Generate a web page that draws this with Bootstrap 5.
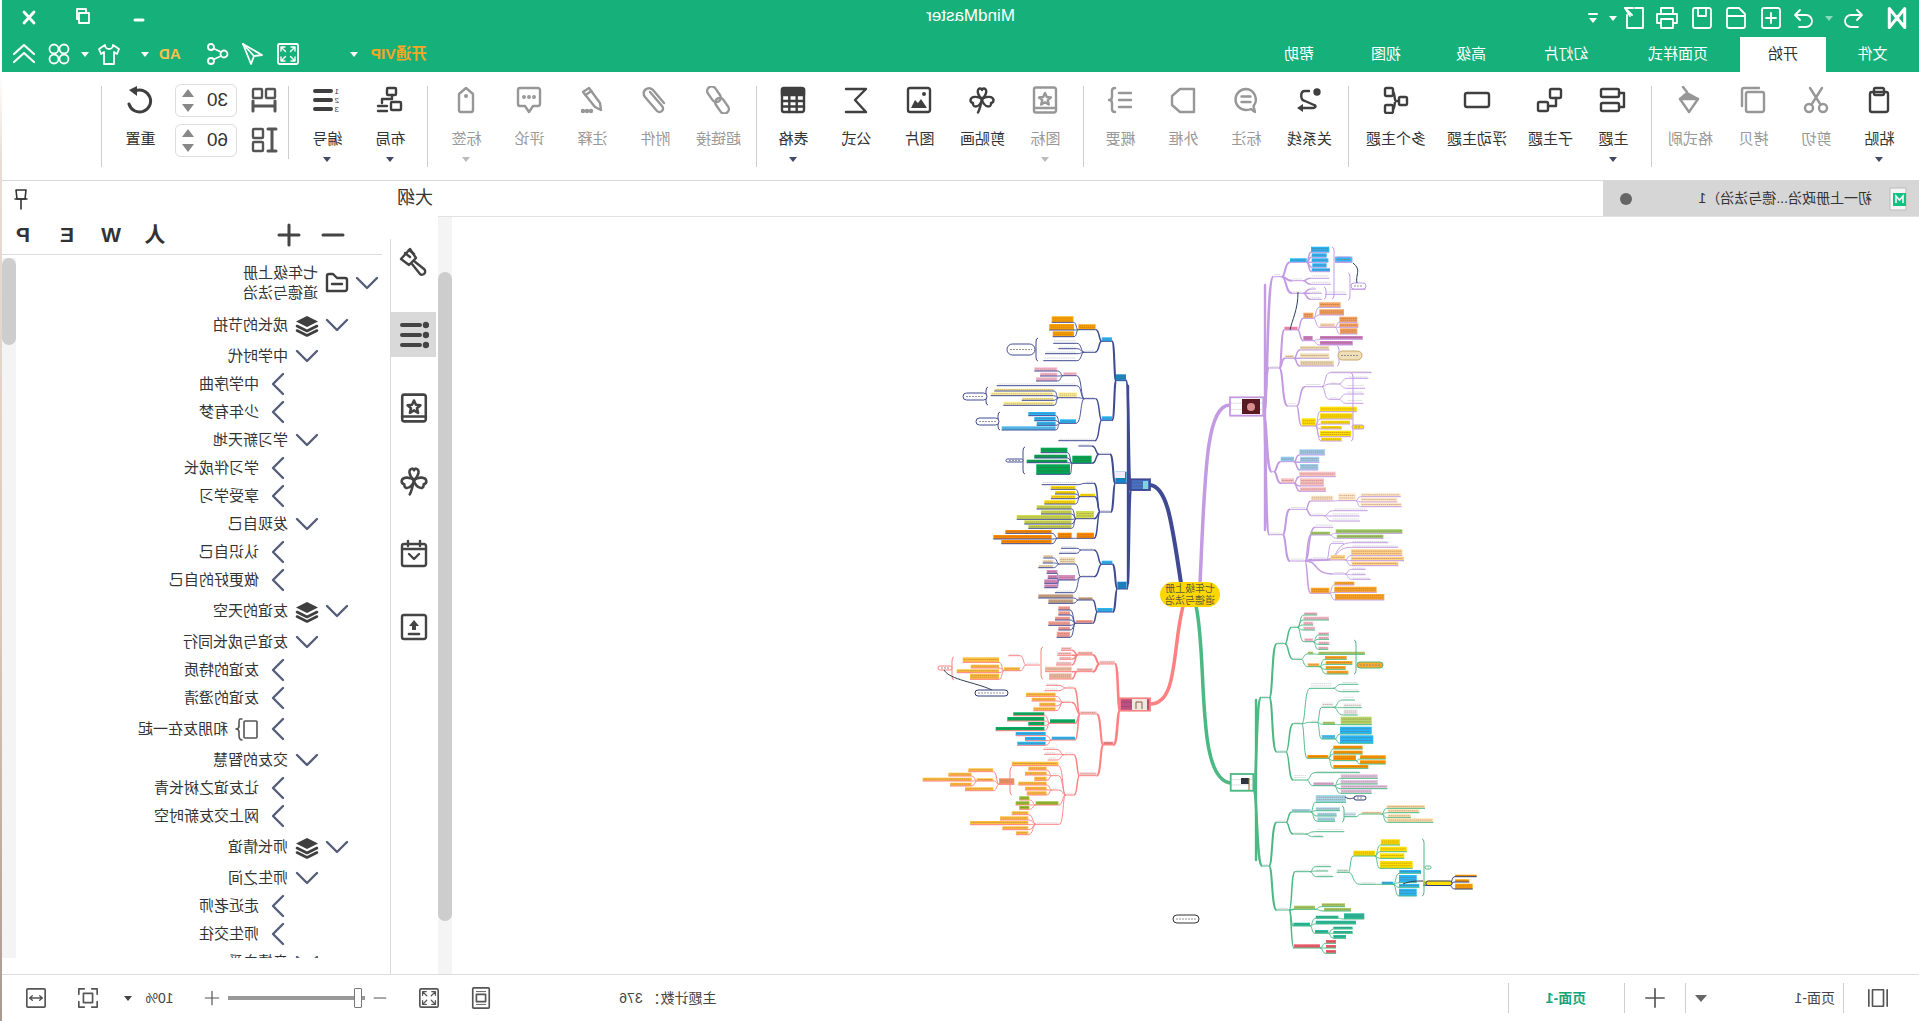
<!DOCTYPE html>
<html lang="zh">
<head>
<meta charset="utf-8">
<title>MindMaster</title>
<link href="https://cdn.jsdelivr.net/npm/bootstrap@5.3.0/dist/css/bootstrap.min.css" rel="stylesheet">
<style>
html,body{height:100%;margin:0;overflow:hidden}
body{padding-left:2px;background:linear-gradient(#fff 0,#fff 7%,#e9ddd3 16%,#d9cabf 60%,#a89a90 100%);font-family:"Liberation Sans","Noto Sans CJK SC",sans-serif;color:#333}
.mm-app{width:1917px;height:1021px;transform:scaleX(-1);background:#fff}
.mm-ico{width:28px;height:28px;fill:none;stroke:currentColor;stroke-width:2.4;stroke-linecap:round;stroke-linejoin:round;flex:none;display:block}
.mm-head{height:72px;background:#16b07a;color:#fff}
.q-row{height:36px;display:grid;grid-template-columns:1fr auto 1fr}
.q-side{display:flex;align-items:center;padding-left:10px}
.q-ico{width:24px;height:24px;stroke-width:1.8}
.q-more{width:12px;height:14px;stroke-width:1.4}
.q-title{font-size:17px;line-height:32px;margin-left:-20px}
.gx-5{margin-left:5px}.gx-8{margin-left:8px}.gx-9{margin-left:9px}.gx-10{margin-left:10px}.gx-11{margin-left:11px}.gx-20{margin-left:20px}.gx-50{margin-left:50px}.gx-25{margin-left:25px}
.gx-5b{margin-left:10px}
.tri{width:0;height:0;border-left:4px solid transparent;border-right:4px solid transparent;border-top:5px solid currentColor;flex:none}
.win-btn{width:55px;display:flex;justify-content:center}
.t-row2{height:36px;display:flex;align-items:flex-end}
.mm-tab{height:35px;display:flex;align-items:center;justify-content:center;font-size:15px;color:#fff;flex:none}
.tab-1{width:93px}.tab-2{width:86px;background:#fff;color:#333}.tab-3{width:124px}.tab-4{width:100px}.tab-5{width:90px}.tab-6{width:80px}.tab-7{width:94px}
.r-tools{margin-left:auto;height:36px;display:flex;align-items:center;padding-right:10px}
.vip{font-size:15.500px;color:#f5a623;font-weight:700;width:60px;text-align:center;white-space:nowrap}
.ad{font-size:15px;color:#f2c14e;font-weight:700}
.mm-ribbon{height:109px;border-bottom:1px solid #d8d8d8;padding-left:8px;display:flex;background:#fff}
.rb-i{width:63px;flex:none;padding-top:14px;display:flex;flex-direction:column;align-items:center;color:#3f3f3f}
.rb-l{font-size:15px;line-height:20px;margin-top:15px;white-space:nowrap;color:#333}
.rb-i .tri{margin-top:8px;color:#444a66}
.rb-off{color:#979797}.rb-off .rb-l{color:#999}.rb-off .tri{color:#bbb}
.rb-w84{width:84px}.rb-w78{width:78px}
.rb-sep{width:1px;height:81px;margin-top:14px;background:#cfcfcf;flex:none;margin-left:7px;margin-right:6px}
.sep-8{margin-left:8px;margin-right:7px}.sep-5{margin-left:5px;margin-right:6px}.sep-7{margin-left:7px;margin-right:5px}
.sep-s{height:73px;margin-right:10px}
.sz-col{width:28px;padding-top:14px;display:flex;flex-direction:column;gap:12px;color:#555;flex:none}
.sp-col{width:62px;margin-left:13px;padding-top:12px;display:flex;flex-direction:column;gap:7px;flex:none}
.sp-box{height:33px;border:1px solid #ddd;border-radius:6px;display:flex;align-items:center;justify-content:space-between;padding:0 6px 0 8px;font-size:19px}
.sp-ar{display:flex;flex-direction:column;gap:7px;color:#777}
.tri-u{width:0;height:0;border-left:6px solid transparent;border-right:6px solid transparent;border-bottom:8px solid #888}
.tri-d{width:0;height:0;border-left:6px solid transparent;border-right:6px solid transparent;border-top:8px solid #888}
.rb-reset{margin-left:3px}
.mm-main{height:793px;display:flex}
.doc-col{width:1481px;flex:none;display:flex;flex-direction:column}
.doc-tabs{height:36px;border-bottom:1px solid #e2e2e2;flex:none}
.doc-tab{width:316px;height:35px;background:#d6d6d6;display:flex;align-items:center;padding-left:12px;font-size:14px}
.doc-ico{width:18px;height:24px;flex:none;margin-right:17px}
.doc-dot{width:12px;height:12px;border-radius:50%;background:#666;margin-left:auto;margin-right:17px}
.doc-body{flex:1;display:flex;min-height:0}
.map-svg{width:1467px;height:757px;transform:scaleX(-1);display:block;flex:none}
.sb-track{width:14px;background:#f4f4f4;flex:none}
.sb-thumb{background:#cdcdcd;border-radius:7px}
.th-a{height:649px;margin-top:55px}
.th-b{height:87px}
.pane{width:436px;flex:none;display:flex;flex-direction:column}
.pane-h{height:35px;display:flex;align-items:center;padding-left:5px;padding-right:11px;font-size:18px;flex:none}
.pane-pin{margin-left:auto;width:16px;height:22px;stroke-width:1.6}
.pane-b{flex:1;display:flex;min-height:0}
.rail{width:47px;padding-top:9px;flex:none;color:#444}
.rail-i{height:73px;display:flex;align-items:center;justify-content:center}
.rail-on{width:45px;height:45px;background:#d9d9d9;display:flex;align-items:center;justify-content:center;margin-left:1px}
.rail-g{width:30px;height:30px}
.pane-sep{width:1px;background:#d9d9d9;margin-top:23px;flex:none}
.tree-col{width:388px;flex:none;display:flex;flex-direction:column}
.tool-row{height:39px;margin-left:8px;border-bottom:1px solid #dcdcdc;display:flex;align-items:center;flex:none;color:#333;font-weight:700;font-size:21px}
.tb-g{width:24px;height:24px;stroke-width:3;color:#444}
.tb-a{margin-left:37px}.tb-b{margin-left:20px}.tb-c{margin-left:110px}
.tb-t{width:24px;text-align:center;line-height:24px;font-family:"Liberation Sans","Noto Sans CJK SC",sans-serif}
.tree-w{flex:1;display:flex;margin-top:3px;margin-bottom:16px;min-height:0}
.tree{width:374px;flex:none;overflow:hidden;font-size:15px;line-height:20px}
.sb-b{background:#f4f4f4}
.t-row{display:flex;align-items:center;height:28px;white-space:nowrap;color:#333}
.l0{height:50px;padding-left:11px}
.l1{height:34px;padding-left:41px}
.l2{padding-left:71px}
.l3{padding-left:100px}
.l3x{height:34px}
.chev{width:24px;height:24px;color:#555e78;flex:none;stroke-width:2.4}
.t-g{width:24px;height:24px;flex:none;margin-left:6px;color:#3f3f3f}
.t-txt{margin-left:7px}
.t-g2{margin-left:7px;width:24px;height:24px;flex:none;color:#555;stroke-width:1.6}
.mm-status{height:47px;border-top:1px solid #dcdcdc;display:flex;align-items:center;font-size:14px;color:#444;flex:none;background:#fff}
.st-sep{width:1px;height:30px;background:#cfcfcf;flex:none}
.st-g{width:22px;height:22px;stroke-width:1.8;color:#555;flex:none}
.st-pg2{width:115px;text-align:center;color:#16a67a;font-weight:700}
.st-count{margin-left:791px;width:107px;white-space:nowrap}
.sl{width:137px;height:4px;background:#999;position:relative;flex:none;margin-left:8px;margin-right:8px}
.sl-th{position:absolute;left:3px;top:-8px;width:8px;height:20px;background:#fff;border:1px solid #777;border-radius:1px}
.tri-b{border-left-width:6px;border-right-width:6px;border-top-width:7px;color:#666}
.s30{margin-left:30px}.s23{margin-left:23px}.s8{margin-left:8px}.s91{margin-left:88px}.s10{margin-left:9px}.s19{margin-left:19px}.s118{margin-left:118px}.s31{margin-left:31px}.s14{margin-left:14px}.s25{margin-left:25px}
.s-min{width:14px;height:22px}.s-pl{width:16px;height:22px}
</style>
</head>
<body>
<svg class="d-none" xmlns="http://www.w3.org/2000/svg">
<symbol id="i-paste" viewBox="0 0 28 28"><rect x="5" y="6" width="18" height="20" rx="2"/><rect x="9" y="2" width="10" height="7" rx="1.5"/></symbol>
<symbol id="i-cut" viewBox="0 0 28 28"><circle cx="7" cy="22" r="4"/><circle cx="21" cy="22" r="4"/><path d="M9.5 18.5 20 2M18.5 18.5 8 2"/></symbol>
<symbol id="i-copy" viewBox="0 0 28 28"><rect x="3" y="6" width="18" height="20" rx="2"/><path d="M8 2H23a2 2 0 0 1 2 2V20"/></symbol>
<symbol id="i-brush" viewBox="0 0 28 28"><path d="M6 13 17 7 24 13Z" fill="currentColor"/><path d="M6 13 15 26 24 13M17 6 21 1"/></symbol>
<symbol id="i-topic" viewBox="0 0 28 28"><rect x="8" y="3" width="18" height="8" rx="1.5"/><rect x="8" y="17" width="18" height="8" rx="1.5"/><path d="M8 7H3V21H8"/></symbol>
<symbol id="i-sub" viewBox="0 0 28 28"><rect x="3" y="3" width="11" height="9" rx="1.5"/><rect x="16" y="16" width="10" height="9" rx="1.5"/><path d="M8 12V20H16"/></symbol>
<symbol id="i-float" viewBox="0 0 28 28"><rect x="2" y="7" width="24" height="14" rx="2"/></symbol>
<symbol id="i-multi" viewBox="0 0 28 28"><rect x="17" y="2" width="8" height="8" rx="1.5"/><rect x="17" y="19" width="8" height="8" rx="1.5"/><rect x="3" y="11" width="8" height="8" rx="1.5"/><path d="M11 15H14C16 15 15 6 17 6M14 15C16 15 15 23 17 23"/></symbol>
<symbol id="i-rel" viewBox="0 0 28 28"><circle cx="6" cy="6" r="2.5" fill="currentColor"/><path d="M14 5H18C23 5 23 14 18 15L9 19C6 20 8 22 10 22H20"/><path d="M20 18 26 22 20 26Z" fill="currentColor" stroke="none"/></symbol>
<symbol id="i-note" viewBox="0 0 28 28"><path d="M14 3A10.5 10.5 0 0 1 14 24C12 24 10 23.500 9 23L5 26 6.500 20A10.500 10.500 0 0 1 14 3Z"/><path d="M9.500 10.500H18.500M9.500 16H18.500"/></symbol>
<symbol id="i-frame" viewBox="0 0 28 28"><path d="M3 3H17L25 10V19L17 26H3Z"/></symbol>
<symbol id="i-sum" viewBox="0 0 28 28"><path d="M3 7H15M3 14H15M3 21H15M19 2Q22 2 22 5V11Q22 14 25 14 22 14 22 17V23Q22 26 19 26"/></symbol>
<symbol id="i-star" viewBox="0 0 28 28"><rect x="3" y="1.500" width="22" height="25" rx="2"/><path d="M14 7 15.800 11 20 11.400 16.800 14.200 17.800 18.500 14 16.200 10.200 18.500 11.200 14.200 8 11.400 12.200 11Z"/><path d="M3 22H25"/></symbol>
<symbol id="i-clover" viewBox="0 0 28 28"><path d="M14 13C9 9 8.500 3 12 2.500 13.500 2.300 14 4 14 4S14.500 2.300 16 2.500C19.500 3 19 9 14 13Z"/><path d="M14 13C10 10 3 10 2.500 14 2.300 16.500 5 17 5 17S4.500 20.500 7.500 20.500C11 20.500 14 16 14 13Z"/><path d="M14 13C18 10 25 10 25.500 14 25.700 16.500 23 17 23 17S23.500 20.500 20.500 20.500C17 20.500 14 16 14 13Z"/><path d="M14 13C15 18 16 23 18 26.500"/></symbol>
<symbol id="i-img" viewBox="0 0 28 28"><rect x="3" y="2" width="22" height="24" rx="2"/><path d="M6 22 12 13 15 17 18 14 22 22Z" fill="currentColor" stroke="none"/><circle cx="9" cy="8" r="2" fill="currentColor" stroke="none"/></symbol>
<symbol id="i-sigma" viewBox="0 0 28 28"><path d="M24 3H4L15 14 4 26H24"/></symbol>
<symbol id="i-table" viewBox="0 0 28 28"><rect x="3" y="2" width="22" height="24" rx="2"/><path d="M3 3H25V9H3Z" fill="currentColor"/><path d="M3 15H25M3 20.500H25M10.300 9V26M17.700 9V26"/></symbol>
<symbol id="i-link" viewBox="0 0 28 28"><g transform="rotate(-55 14 14)"><rect x="-1.500" y="9.500" width="17" height="9" rx="4.500"/><rect x="12.500" y="9.500" width="17" height="9" rx="4.500"/></g></symbol>
<symbol id="i-clip" viewBox="0 0 28 28"><path d="M18 5 6 19A3.500 3.500 0 0 0 11 24L23 10A5 5 0 0 0 15 3L4 16" transform="translate(1 1)"/></symbol>
<symbol id="i-pen" viewBox="0 0 28 28"><path d="M17 2 23 6 11 21 5 24 6 17Z"/><path d="M14.500 5 20.500 9"/><circle cx="15" cy="25" r="1" fill="currentColor"/><circle cx="19" cy="25" r="1" fill="currentColor"/><circle cx="23" cy="25" r="1" fill="currentColor"/></symbol>
<symbol id="i-cmt" viewBox="0 0 28 28"><path d="M5 2H23A2 2 0 0 1 25 4V18A2 2 0 0 1 23 20H18L14 26 10 20H5A2 2 0 0 1 3 18V4A2 2 0 0 1 5 2Z"/><circle cx="9" cy="11" r=".8" fill="currentColor"/><circle cx="14" cy="11" r=".8" fill="currentColor"/><circle cx="19" cy="11" r=".8" fill="currentColor"/></symbol>
<symbol id="i-tag" viewBox="0 0 28 28"><path d="M14 2 21 8V24A2 2 0 0 1 19 26H9A2 2 0 0 1 7 24V8Z"/><circle cx="14" cy="10" r="2" fill="currentColor" stroke="none"/></symbol>
<symbol id="i-org" viewBox="0 0 28 28"><rect x="8" y="2" width="9" height="7" rx="1"/><rect x="3" y="16" width="10" height="8" rx="1"/><path d="M12 9V13H22V17M17 20H26M17 25H26"/></symbol>
<symbol id="i-num" viewBox="0 0 28 28"><path d="M10 5H26M10 14H26M10 23H26" stroke-width="4"/><text x="2" y="8" font-size="8" fill="currentColor" stroke="none">1</text><text x="2" y="17" font-size="8" fill="currentColor" stroke="none">2</text><text x="2" y="26" font-size="8" fill="currentColor" stroke="none">3</text></symbol>
<symbol id="i-h" viewBox="0 0 28 28"><rect x="3" y="3" width="9" height="9" rx="1"/><rect x="16" y="3" width="9" height="9" rx="1"/><path d="M3 20H25M3 15V25M25 15V25" stroke-width="3"/></symbol>
<symbol id="i-v" viewBox="0 0 28 28"><rect x="15" y="3" width="10" height="9" rx="1"/><rect x="15" y="16" width="10" height="9" rx="1"/><path d="M6 3V25M2 3H10M2 25H10" stroke-width="3"/></symbol>
<symbol id="i-reset" viewBox="0 0 28 28"><path d="M19 5A11 11 0 1 0 25 18" stroke-width="3"/><path d="M17 0 25 4 17 10Z" fill="currentColor" stroke="none"/></symbol>
<symbol id="i-down" viewBox="0 0 24 24"><path d="M2 7 12 17 22 7"/></symbol>
<symbol id="i-right" viewBox="0 0 24 24"><path d="M7 2 17 12 7 22"/></symbol>
<symbol id="i-folder" viewBox="0 0 24 24"><path d="M4 7H12L16 3H20A2 2 0 0 1 22 5V20H4A2 2 0 0 1 2 18V9A2 2 0 0 1 4 7Z"/><path d="M7 13H17"/></symbol>
<symbol id="i-stack" viewBox="0 0 24 24"><path d="M12 3 23 8.500 12 14 1 8.500Z" fill="currentColor" stroke="none"/><path d="M2 13 12 18 22 13M2 17.500 12 22.500 22 17.500" stroke-width="2.600"/></symbol>
<symbol id="i-sumr" viewBox="0 0 24 24"><rect x="2" y="4" width="13" height="17" rx="1"/><path d="M17 2H19Q20 2 20 6V9Q20 12 23 12 20 12 20 15V18Q20 23 17 23"/></symbol>
<symbol id="r-brush" viewBox="0 0 30 30"><path d="M15 14 5 22A3 3 0 0 0 9 27L17 17"/><path d="M13 11 20 18 28 12 19 2Z"/><path d="M15 7 20 3M19 10 24 6"/></symbol>
<symbol id="r-list" viewBox="0 0 30 30"><path d="M9 5H27M9 15H27M9 25H27" stroke-width="4"/><circle cx="3" cy="5" r="2" fill="currentColor"/><circle cx="3" cy="15" r="2" fill="currentColor"/><circle cx="3" cy="25" r="2" fill="currentColor"/></symbol>
<symbol id="r-cal" viewBox="0 0 30 30"><rect x="3" y="5" width="24" height="22" rx="2"/><path d="M3 10H27M9 2V7M21 2V7M10 15 15 20 20 15"/></symbol>
<symbol id="r-up" viewBox="0 0 30 30"><rect x="3" y="3" width="24" height="24" rx="2"/><path d="M10 22H20" stroke-width="2.600"/><path d="M15 8 20 14H17V18H13V14H10Z" fill="currentColor" stroke="none"/></symbol>
<symbol id="q-logo" viewBox="0 0 24 28"><path d="M3 3V25L12 14ZM21 3V25L12 14Z" stroke-width="3.500"/></symbol>
<symbol id="q-redo" viewBox="0 0 24 24"><path d="M7 21H14A6 6 0 0 0 14 9H4M8 4 3 9 8 14"/></symbol>
<symbol id="q-undo" viewBox="0 0 24 24"><path d="M17 21H10A6 6 0 0 1 10 9H20M16 4 21 9 16 14"/></symbol>
<symbol id="q-new" viewBox="0 0 24 24"><rect x="3" y="2" width="18" height="20" rx="2"/><path d="M12 7V17M7 12H17"/></symbol>
<symbol id="q-open" viewBox="0 0 24 24"><path d="M3 8V20A2 2 0 0 0 5 22H19A2 2 0 0 0 21 20V4A2 2 0 0 0 19 2H9L3 8ZM3 10H21"/></symbol>
<symbol id="q-save" viewBox="0 0 24 24"><rect x="3" y="2" width="18" height="20" rx="2"/><path d="M8 2V10H16V2"/></symbol>
<symbol id="q-print" viewBox="0 0 24 24"><path d="M6 8V2H18V8M6 17H2V8H22V17H18"/><rect x="6" y="13" width="12" height="9"/></symbol>
<symbol id="q-exp" viewBox="0 0 24 24"><path d="M11 2H3V22H19V9M13 2H21L16 10"/><path d="M21 2 14 9"/></symbol>
<symbol id="q-more" viewBox="0 0 12 14"><path d="M2 3H10" stroke-width="2"/><path d="M2 7H10L6 12Z" fill="currentColor" stroke="none"/></symbol>
<symbol id="q-coll" viewBox="0 0 24 24"><path d="M2 12 12 3 22 12M2 20 12 11 22 20" stroke-width="2.200"/></symbol>
<symbol id="q-cl" viewBox="0 0 24 24"><circle cx="7" cy="7" r="4.500"/><circle cx="17" cy="7" r="4.500"/><circle cx="7" cy="17" r="4.500"/><circle cx="17" cy="17" r="4.500"/></symbol>
<symbol id="q-shirt" viewBox="0 0 24 24"><path d="M8 3 2 7 4 12 7 10V22H17V10L20 12 22 7 16 3A4 4 0 0 1 8 3Z"/></symbol>
<symbol id="q-share" viewBox="0 0 24 24"><circle cx="19" cy="5" r="3"/><circle cx="19" cy="19" r="3"/><circle cx="6" cy="12" r="3.500"/><path d="M9 10 16.500 6.500M9 14 16.500 17.500"/></symbol>
<symbol id="q-plane" viewBox="0 0 24 24"><path d="M22 2 3 13 11 14 14 22Z"/><path d="M11 14 22 2"/></symbol>
<symbol id="q-full" viewBox="0 0 24 24"><rect x="2" y="2" width="20" height="20" rx="1.500"/><path d="M5 9V5H9M19 9V5H15M5 15V19H9M19 15V19H15M5 5 9.500 9.500M19 5 14.500 9.500M5 19 9.500 14.500M19 19 14.500 14.500" stroke-width="1.400"/></symbol>
<symbol id="q-pin" viewBox="0 0 16 22"><path d="M3 2H13L12 11H4Z"/><path d="M8 11V21M2 11H14"/></symbol>
<symbol id="s-page" viewBox="0 0 24 24"><path d="M2 3V21M22 3V21"/><rect x="6" y="3" width="12" height="18"/></symbol>
<symbol id="s-plus" viewBox="0 0 24 24"><path d="M12 2V22M2 12H22"/></symbol>
<symbol id="s-minus" viewBox="0 0 24 24"><path d="M2 12H22"/></symbol>
<symbol id="s-wide" viewBox="0 0 24 24"><rect x="2" y="2" width="20" height="20" rx="1"/><path d="M5 12H19M5 12 8 9.500M5 12 8 14.500M19 12 16 9.500M19 12 16 14.500" stroke-width="1.500"/></symbol>
<symbol id="s-fit" viewBox="0 0 24 24"><path d="M2 8V2H8M16 2H22V8M2 16V22H8M16 22H22V16"/><rect x="7" y="7" width="10" height="10"/></symbol>
<symbol id="s-fitp" viewBox="0 0 24 24"><rect x="3" y="1" width="18" height="22" rx="1"/><rect x="7" y="8" width="10" height="8"/><path d="M7 5H17M7 19H17" stroke-width="1"/></symbol>
</svg>

<div class="mm-app d-flex flex-column" id="mm-root">
  <header class="mm-head flex-shrink-0">
    <div class="q-row">
      <div class="q-side">
        <svg class="mm-ico q-ico"><use href="#q-logo"/></svg>
        <svg class="mm-ico q-ico gx-20"><use href="#q-redo"/></svg>
        <span class="tri gx-8 opacity-50"></span>
        <svg class="mm-ico q-ico gx-9"><use href="#q-undo"/></svg>
        <svg class="mm-ico q-ico gx-9"><use href="#q-new"/></svg>
        <svg class="mm-ico q-ico gx-11"><use href="#q-open"/></svg>
        <svg class="mm-ico q-ico gx-10"><use href="#q-save"/></svg>
        <svg class="mm-ico q-ico gx-11"><use href="#q-print"/></svg>
        <svg class="mm-ico q-ico gx-9"><use href="#q-exp"/></svg>
        <span class="tri gx-5"></span>
        <svg class="mm-ico q-more gx-5b"><use href="#q-more"/></svg>
      </div>
      <div class="q-title">MindMaster</div>
      <div class="q-side justify-content-end">
        <div class="win-btn"><svg class="mm-ico q-ico" viewBox="0 0 24 24"><path d="M8 14H16" stroke-width="3"/></svg></div>
        <div class="win-btn"><svg class="mm-ico q-ico" viewBox="0 0 24 24"><rect x="7" y="7" width="10" height="10"/><path d="M10 7V3H19V13H17" /></svg></div>
        <div class="win-btn"><svg class="mm-ico q-ico" viewBox="0 0 24 24"><path d="M7 6 17 17M17 6 7 17" stroke-width="2.800"/></svg></div>
      </div>
    </div>
    <div class="t-row2">
      <div class="mm-tab tab-1">文件</div>
      <div class="mm-tab tab-2">开始</div>
      <div class="mm-tab tab-3">页面样式</div>
      <div class="mm-tab tab-4">幻灯片</div>
      <div class="mm-tab tab-5">高级</div>
      <div class="mm-tab tab-6">视图</div>
      <div class="mm-tab tab-7">帮助</div>
      <div class="r-tools">
        <div class="vip">开通VIP</div>
        <span class="tri gx-11"></span>
        <svg class="mm-ico q-ico gx-50"><use href="#q-full"/></svg>
        <svg class="mm-ico q-ico gx-11"><use href="#q-plane"/></svg>
        <svg class="mm-ico q-ico gx-11"><use href="#q-share"/></svg>
        <div class="ad gx-25">AD</div>
        <span class="tri gx-10"></span>
        <svg class="mm-ico q-ico gx-20"><use href="#q-shirt"/></svg>
        <span class="tri gx-8"></span>
        <svg class="mm-ico q-ico gx-10"><use href="#q-cl"/></svg>
        <svg class="mm-ico q-ico gx-11"><use href="#q-coll"/></svg>
      </div>
    </div>
  </header>

  <section class="mm-ribbon flex-shrink-0">
    <div class="rb-i"><svg class="mm-ico"><use href="#i-paste"/></svg><div class="rb-l">粘贴</div><span class="tri"></span></div>
    <div class="rb-i rb-off"><svg class="mm-ico"><use href="#i-cut"/></svg><div class="rb-l">剪切</div></div>
    <div class="rb-i rb-off"><svg class="mm-ico"><use href="#i-copy"/></svg><div class="rb-l">拷贝</div></div>
    <div class="rb-i rb-off"><svg class="mm-ico"><use href="#i-brush"/></svg><div class="rb-l">格式刷</div></div>
    <div class="rb-sep"></div>
    <div class="rb-i"><svg class="mm-ico"><use href="#i-topic"/></svg><div class="rb-l">主题</div><span class="tri"></span></div>
    <div class="rb-i"><svg class="mm-ico"><use href="#i-sub"/></svg><div class="rb-l">子主题</div></div>
    <div class="rb-i rb-w84"><svg class="mm-ico"><use href="#i-float"/></svg><div class="rb-l">浮动主题</div></div>
    <div class="rb-i rb-w78"><svg class="mm-ico"><use href="#i-multi"/></svg><div class="rb-l">多个主题</div></div>
    <div class="rb-sep sep-8"></div>
    <div class="rb-i"><svg class="mm-ico"><use href="#i-rel"/></svg><div class="rb-l">关系线</div></div>
    <div class="rb-i rb-off"><svg class="mm-ico"><use href="#i-note"/></svg><div class="rb-l">标注</div></div>
    <div class="rb-i rb-off"><svg class="mm-ico"><use href="#i-frame"/></svg><div class="rb-l">外框</div></div>
    <div class="rb-i rb-off"><svg class="mm-ico"><use href="#i-sum"/></svg><div class="rb-l">概要</div></div>
    <div class="rb-sep sep-5"></div>
    <div class="rb-i rb-off"><svg class="mm-ico"><use href="#i-star"/></svg><div class="rb-l">图标</div><span class="tri"></span></div>
    <div class="rb-i"><svg class="mm-ico"><use href="#i-clover"/></svg><div class="rb-l">剪贴画</div></div>
    <div class="rb-i"><svg class="mm-ico"><use href="#i-img"/></svg><div class="rb-l">图片</div></div>
    <div class="rb-i"><svg class="mm-ico"><use href="#i-sigma"/></svg><div class="rb-l">公式</div></div>
    <div class="rb-i"><svg class="mm-ico"><use href="#i-table"/></svg><div class="rb-l">表格</div><span class="tri"></span></div>
    <div class="rb-sep sep-5"></div>
    <div class="rb-i rb-off"><svg class="mm-ico"><use href="#i-link"/></svg><div class="rb-l">超链接</div></div>
    <div class="rb-i rb-off"><svg class="mm-ico"><use href="#i-clip"/></svg><div class="rb-l">附件</div></div>
    <div class="rb-i rb-off"><svg class="mm-ico"><use href="#i-pen"/></svg><div class="rb-l">注释</div></div>
    <div class="rb-i rb-off"><svg class="mm-ico"><use href="#i-cmt"/></svg><div class="rb-l">评论</div></div>
    <div class="rb-i rb-off"><svg class="mm-ico"><use href="#i-tag"/></svg><div class="rb-l">标签</div><span class="tri"></span></div>
    <div class="rb-sep sep-7"></div>
    <div class="rb-i"><svg class="mm-ico"><use href="#i-org"/></svg><div class="rb-l">布局</div><span class="tri"></span></div>
    <div class="rb-i"><svg class="mm-ico"><use href="#i-num"/></svg><div class="rb-l">编号</div><span class="tri"></span></div>
    <div class="rb-sep sep-s"></div>
    <div class="sz-col"><svg class="mm-ico"><use href="#i-h"/></svg><svg class="mm-ico"><use href="#i-v"/></svg></div>
    <div class="sp-col">
      <div class="sp-box"><span>30</span><span class="sp-ar"><span class="tri-u"></span><span class="tri-d"></span></span></div>
      <div class="sp-box"><span>60</span><span class="sp-ar"><span class="tri-u"></span><span class="tri-d"></span></span></div>
    </div>
    <div class="rb-i rb-reset"><svg class="mm-ico"><use href="#i-reset"/></svg><div class="rb-l">重置</div></div>
    <div class="rb-sep"></div>
  </section>

  <section class="mm-main">
    <div class="doc-col">
      <div class="doc-tabs">
        <div class="doc-tab">
          <svg class="doc-ico" viewBox="0 0 18 24"><path d="M1 1H17V23H1Z" fill="#f5f5f5" stroke="#bbb"/><rect x="1" y="6" width="13" height="13" fill="#12c283"/><path d="M4 16V9L7.500 13 11 9V16" fill="none" stroke="#fff" stroke-width="1.500"/></svg>
          <span>初一上册政治...德与法治）1</span>
          <span class="doc-dot"></span>
        </div>
      </div>
      <div class="doc-body">
        <svg class="map-svg" id="mm-map" viewBox="452 217 1467 757" xmlns="http://www.w3.org/2000/svg"></svg>
        <div class="sb-track"><div class="sb-thumb th-a"></div></div>
      </div>
    </div>
    <aside class="pane">
      <div class="pane-h"><span>大纲</span><svg class="mm-ico pane-pin"><use href="#q-pin"/></svg></div>
      <div class="pane-b">
        <div class="rail">
          <div class="rail-i"><svg class="mm-ico rail-g"><use href="#r-brush"/></svg></div>
          <div class="rail-i"><div class="rail-on"><svg class="mm-ico rail-g"><use href="#r-list"/></svg></div></div>
          <div class="rail-i"><svg class="mm-ico rail-g"><use href="#i-star"/></svg></div>
          <div class="rail-i"><svg class="mm-ico rail-g"><use href="#i-clover"/></svg></div>
          <div class="rail-i"><svg class="mm-ico rail-g"><use href="#r-cal"/></svg></div>
          <div class="rail-i"><svg class="mm-ico rail-g"><use href="#r-up"/></svg></div>
        </div>
        <div class="pane-sep"></div>
        <div class="tree-col">
          <div class="tool-row">
            <svg class="mm-ico tb-g tb-a"><use href="#s-minus"/></svg>
            <svg class="mm-ico tb-g tb-b"><use href="#s-plus"/></svg>
            <div class="tb-t tb-c">人</div>
            <div class="tb-t tb-b">W</div>
            <div class="tb-t tb-b">E</div>
            <div class="tb-t tb-b">P</div>
          </div>
          <div class="tree-w">
            <div class="tree">
              <div class="t-row l0"><svg class="mm-ico chev"><use href="#i-down"/></svg><svg class="mm-ico t-g"><use href="#i-folder"/></svg><span class="t-txt">七年级上册<br>道德与法治</span></div>
              <div class="t-row l1"><svg class="mm-ico chev"><use href="#i-down"/></svg><svg class="mm-ico t-g"><use href="#i-stack"/></svg><span class="t-txt">成长的节拍</span></div>
              <div class="t-row l2"><svg class="mm-ico chev"><use href="#i-down"/></svg><span class="t-txt">中学时代</span></div>
              <div class="t-row l3"><svg class="mm-ico chev"><use href="#i-right"/></svg><span class="t-txt">中学序曲</span></div>
              <div class="t-row l3"><svg class="mm-ico chev"><use href="#i-right"/></svg><span class="t-txt">少年有梦</span></div>
              <div class="t-row l2"><svg class="mm-ico chev"><use href="#i-down"/></svg><span class="t-txt">学习新天地</span></div>
              <div class="t-row l3"><svg class="mm-ico chev"><use href="#i-right"/></svg><span class="t-txt">学习伴成长</span></div>
              <div class="t-row l3"><svg class="mm-ico chev"><use href="#i-right"/></svg><span class="t-txt">享受学习</span></div>
              <div class="t-row l2"><svg class="mm-ico chev"><use href="#i-down"/></svg><span class="t-txt">发现自己</span></div>
              <div class="t-row l3"><svg class="mm-ico chev"><use href="#i-right"/></svg><span class="t-txt">认识自己</span></div>
              <div class="t-row l3"><svg class="mm-ico chev"><use href="#i-right"/></svg><span class="t-txt">做更好的自己</span></div>
              <div class="t-row l1"><svg class="mm-ico chev"><use href="#i-down"/></svg><svg class="mm-ico t-g"><use href="#i-stack"/></svg><span class="t-txt">友谊的天空</span></div>
              <div class="t-row l2"><svg class="mm-ico chev"><use href="#i-down"/></svg><span class="t-txt">友谊与成长同行</span></div>
              <div class="t-row l3"><svg class="mm-ico chev"><use href="#i-right"/></svg><span class="t-txt">友谊的特质</span></div>
              <div class="t-row l3"><svg class="mm-ico chev"><use href="#i-right"/></svg><span class="t-txt">友谊的澄清</span></div>
              <div class="t-row l3 l3x"><svg class="mm-ico chev"><use href="#i-right"/></svg><svg class="mm-ico t-g2"><use href="#i-sumr"/></svg><span class="t-txt">和朋友在一起</span></div>
              <div class="t-row l2"><svg class="mm-ico chev"><use href="#i-down"/></svg><span class="t-txt">交友的智慧</span></div>
              <div class="t-row l3"><svg class="mm-ico chev"><use href="#i-right"/></svg><span class="t-txt">让友谊之树长青</span></div>
              <div class="t-row l3"><svg class="mm-ico chev"><use href="#i-right"/></svg><span class="t-txt">网上交友新时空</span></div>
              <div class="t-row l1"><svg class="mm-ico chev"><use href="#i-down"/></svg><svg class="mm-ico t-g"><use href="#i-stack"/></svg><span class="t-txt">师长情谊</span></div>
              <div class="t-row l2"><svg class="mm-ico chev"><use href="#i-down"/></svg><span class="t-txt">师生之间</span></div>
              <div class="t-row l3"><svg class="mm-ico chev"><use href="#i-right"/></svg><span class="t-txt">走近老师</span></div>
              <div class="t-row l3"><svg class="mm-ico chev"><use href="#i-right"/></svg><span class="t-txt">师生交往</span></div>
              <div class="t-row l2"><svg class="mm-ico chev"><use href="#i-down"/></svg><span class="t-txt">亲情之爱</span></div>
            </div>
            <div class="sb-track sb-b"><div class="sb-thumb th-b"></div></div>
          </div>
        </div>
      </div>
    </aside>
  </section>

  <footer class="mm-status">
    <svg class="mm-ico st-g s30"><use href="#s-page"/></svg>
    <div class="st-sep s23"></div>
    <div class="s8">页面-1</div>
    <span class="tri tri-b s91"></span>
    <div class="st-sep s10"></div>
    <svg class="mm-ico st-g s19"><use href="#s-plus"/></svg>
    <div class="st-sep s19"></div>
    <div class="st-pg2">页面-1</div>
    <div class="st-sep"></div>
    <div class="st-count">主题计数： 376</div>
    <svg class="mm-ico st-g s118"><use href="#s-fitp"/></svg>
    <svg class="mm-ico st-g s30"><use href="#q-full"/></svg>
    <svg class="mm-ico st-g s31 s-min"><use href="#s-minus"/></svg>
    <div class="sl"><div class="sl-th"></div></div>
    <svg class="mm-ico st-g s-pl"><use href="#s-plus"/></svg>
    <div class="s30">10%</div>
    <span class="tri s14"></span>
    <svg class="mm-ico st-g s25"><use href="#s-fit"/></svg>
    <svg class="mm-ico st-g s30"><use href="#s-wide"/></svg>
  </footer>
</div>

<script src="https://cdn.jsdelivr.net/npm/bootstrap@5.3.0/dist/js/bootstrap.bundle.min.js"></script>
<script>
(function(){
const Z=(ox,oy)=>(x1,x2,y1,y2,f,k)=>({x1:ox+x1/3,x2:ox+x2/3,y1:oy+y1/3,y2:oy+y2/3,f:f||'',k:k||[]});
const a=Z(900,230),b=Z(900,540),c=Z(1220,240),d=Z(1200,600);
const O='#ffa500',CY='#29b6f6',PK='#f8bbd0',LY='#fff59d',GR='#00a651',YE='#ffe000',LM='#cddc50',OR='#ff8c00',TN='#eedfb8',MV='#d68fc0',BR='#c8a888',SM='#f5a598',LP='#f8d0d0',AM='#ffc040',OL='#90c030',PC='#f4a460',VL='#c97fbf',SK='#a0d0f0',RS='#f8c0c0',CR='#ffe8c8',LG='#9ccc65',GO='#ffd38a',OA='#ffa726',TE='#20c0a0',RD='#f06070',LB='#a8d8ea',GY='#f0f0f0';
const blue=[a(692,750,748,780,'#4472c4',[
 a(648,678,433,452,'#1e88c8',[
  a(605,636,322,334,CY,[
   a(535,587,283,299,O,[a(455,520,259,277,O),a(448,522,282,300,O),a(458,522,304,320,O)]),
   a(553,585,360,367,'',[a(460,530,326,340),a(475,530,348,356),a(435,530,363,371),a(430,530,378,392)])]),
  a(605,636,559,571,CY,[
   a(553,587,500,506,'',[
    a(490,530,427,437,PK,[a(403,472,412,423,PK),a(420,472,428,438,PK),a(408,472,442,453,PK)]),
    a(290,530,458,467),
    a(475,532,487,503,LY,[a(283,462,476,483,LY),a(272,460,487,497,LY),a(365,462,503,511,LY),a(310,462,515,526,LY)]),
    a(480,528,568,580,CY,[a(385,467,546,557,CY),a(403,467,561,572,CY),a(410,467,575,586,CY),a(305,467,589,600,'#4fc3f7')])]),
   a(475,585,625,632)])]),
 a(646,680,725,760,'#1386c9',[
  a(597,630,667,673,'',[a(535,575,642,648),
   a(517,575,677,700,GR,[a(422,502,653,668,GR),a(403,502,674,684,GR),a(380,502,689,698,GR),a(409,510,703,733,GR)])]),
  a(600,632,838,846,'',[
   a(556,582,752,760,'',[a(425,530,752,764)]),
   a(540,585,791,800,YE,[a(452,526,768,778,YE),a(465,526,783,792,YE),a(453,526,796,806,YE),a(433,526,811,822,YE)]),
   a(528,582,843,866,LM,[a(410,515,826,837,LM),a(423,515,841,852,LM),a(350,515,855,868,LM),a(373,515,871,882,LM),a(385,515,885,895,LM)]),
   a(530,582,908,925,OR,[a(473,515,908,925,OR,[a(316,455,900,910,OR),a(280,455,915,927,OR),a(304,455,930,941,OR)])])])]),
 b(652,680,125,147,'#1386c9',[
  b(605,637,62,73,CY,[
   b(543,582,25,30,'',[b(483,530,17,25),b(477,530,33,40)]),
   b(542,582,105,110,'',[
    b(478,525,52,72,TN,[b(430,460,45,54,TN),b(428,460,60,69,TN),b(415,460,75,83,TN)]),
    b(475,525,105,120,MV,[b(440,472,90,100,MV),b(443,472,105,115,MV),b(433,472,118,130,MV),b(433,472,133,143,MV)]),
    b(465,520,150,158)])]),
  b(592,638,204,216,CY,[
   b(535,578,172,180,BR,[b(415,520,163,174,BR),b(445,520,178,190,BR)]),
   b(527,578,240,250,SM,[b(475,510,199,210,SM),b(475,510,214,225,SM),b(465,510,230,240,SM),b(445,510,244,256,SM),b(475,510,260,270,SM),b(470,510,275,292,SM)])])])])];
const red=[b(660,750,475,512,'#b94f82',[
 b(598,645,362,372,LP,[
  b(533,578,335,345,'#f4b8b0',[b(483,515,321,331,LP),b(472,515,336,346,LP),b(478,515,350,358,LP),b(468,515,365,375,LP)]),
  b(530,578,385,395,'#f4b8b0',[b(435,515,380,395,'#efc0a8'),b(447,515,400,417,'#efc0a8')])]),
 b(610,640,605,615,'#f08888',[
  b(540,590,514,522,LP,[
   b(498,522,438,444,'',[b(438,475,430,436),b(433,475,443,452)]),
   b(490,515,482,487,'',[b(378,467,458,469,AM),b(395,467,473,483,AM),b(418,467,488,498,AM),b(400,467,502,512,AM)]),
   b(450,525,538,550,'#00b060',[b(340,433,517,527,'#00b060'),b(322,433,531,543,'#00b060'),b(385,433,546,557,'#00b060'),b(287,433,561,572,'#00b060')]),
   b(455,525,590,600,CY,[b(347,437,576,587,CY),b(375,437,591,602,CY),b(352,437,605,616,CY)])]),
  b(538,590,697,707,LP,[
   b(492,522,635,644,'',[b(430,468,620,628),b(432,470,635,643),b(443,470,650,660)]),
   b(497,522,756,765,'',[
    b(335,475,665,677,AM),
    b(455,475,697,707,'',[b(385,440,680,690,AM),b(375,440,695,705,AM),b(403,440,710,721,AM)]),
    b(455,475,740,750,'',[b(355,440,725,735,AM),b(375,440,740,750,AM),b(380,440,754,765,AM)]),
    b(407,475,784,795,OL,[b(358,388,769,780,OL),b(347,388,784,795,OL),b(358,388,798,808,OL)]),
    b(408,478,845,853,'',[b(335,385,814,824,AM),b(300,385,829,840,AM),b(210,385,843,854,AM),b(307,385,859,869,AM),b(348,385,874,884,AM)])])])])])];
const red2=[b(378,420,365,375,'',[b(325,360,340,347),b(312,360,382,392,AM,[b(188,297,352,367,AM),b(212,297,374,384,AM),b(170,297,388,398,AM),b(210,297,401,418,AM)])]),
 b(297,343,715,733,'#f0986a',[b(230,280,715,723,AM,[b(145,215,698,708,AM),b(68,215,713,723,AM),b(150,215,728,738,AM)]),b(205,280,685,695,AM),b(195,280,742,752,AM)])];
const purple=[c(30,130,472,527,'#fff',[
 c(160,185,98,110,'',[
  c(210,260,55,67,CY,[c(273,328,20,37,CY),c(275,320,40,52,CY),c(275,325,55,67,CY),c(277,320,70,82,CY),c(275,330,85,95,CY)]),
  c(217,250,113,122,'',[c(272,328,102,115),c(272,333,122,133)]),
  c(217,250,153,160,'',[c(272,288,138,147),c(272,305,153,160),c(272,305,170,178)])]),
 c(147,178,378,384,'',[
  c(193,233,260,270,'#f48fb1',[
   c(250,280,218,235,PC,[c(298,362,187,202,PC),c(298,372,208,225,PC),c(300,345,250,262,'#fbd9bb',[c(358,412,230,247,PC),c(358,415,250,262,PC),c(360,412,265,282,PC)])]),
   c(250,278,288,302,VL,[c(300,428,288,298,VL),c(300,398,303,315,VL)])]),
  c(195,222,345,355,TN,[c(240,328,318,330,TN),c(240,328,340,355,TN),c(240,342,362,378,TN)]),
  c(203,230,485,498,'',[
   c(255,305,428,440,'',[c(330,455,393,398,'',[]),c(330,355,428,432,'',[c(385,445,408,415),c(380,435,430,445)]),c(328,355,470,478,'',[c(380,432,452,462),c(380,430,475,490)])]),
   c(245,287,535,558,YE,[c(300,410,500,515,YE),c(300,398,520,537,YE),c(302,390,542,552,YE),c(302,365,558,567,YE),c(300,393,572,590,YE),c(303,365,593,603,YE)])])]),
 c(155,162,680,695,'',[
  c(182,222,650,665,'#90c8f0',[c(238,315,628,645,SK),c(240,298,650,667,SK),c(240,295,672,690,SK)]),
  c(183,222,715,730,RS,[c(238,347,695,710,RS),c(240,312,715,738,RS),c(240,318,742,754,RS)])]),
 c(148,188,876,884,'',[
  c(210,258,798,808,'',[
   c(272,340,767,783,CR,[c(355,407,760,782,CR,[c(422,542,760,770,CR),c(422,532,773,786,CR),c(422,545,788,800,CR)])]),
   c(275,312,818,827,'',[c(340,443,803,812),c(335,418,817,828),c(335,420,832,843)])]),
  c(210,255,953,963,'',[
   c(285,340,850,862),
   c(272,330,875,885,LG,[c(347,547,868,880,LG),c(350,490,884,895,LG)]),
   c(277,320,950,958,'',[c(335,372,900,910),c(395,505,902,908),c(395,535,915,922)]),
   c(332,375,945,960,GO,[c(393,547,928,947,GO),c(393,552,950,962,GO),c(395,535,965,977,GO)]),
   c(338,375,995,1002,'',[c(395,437,982,988),c(395,437,997,1004),c(395,452,1012,1018)]),
   c(272,328,1043,1060,OA,[c(343,403,1025,1035,OA),c(343,470,1040,1057,OA),c(345,493,1062,1080,OA)])])])])];
const green=[d(92,160,522,572,'#fff',[
 d(183,208,287,293,'',[
  d(230,255,125,131,'',[
   d(275,292,75,82,'',[d(312,352,37,45,PK),d(310,387,50,60,PK),d(310,340,65,75,PK),d(310,345,80,90,PK),d(313,340,115,125,PK,[d(355,387,97,105,PK),d(355,387,110,118,PK),d(355,388,125,133,PK),d(355,385,140,148,PK)])]),
   d(280,303,172,178,'',[d(323,340,155,162,'#b5d56a',[d(355,495,155,163,'#b5d56a')]),d(323,358,190,200,'#ffb74d',[d(375,440,168,178,OA),d(377,457,183,193,OA),d(377,437,198,208,OA),d(380,445,212,222,OA)])])]),
  d(230,258,450,456,'',[
   d(280,305,365,371,'',[
    d(330,398,245,265,'',[d(425,475,243,253),d(425,478,265,275)]),
    d(332,352,360,367,'',[
     d(365,400,307,322,GY,[d(428,465,285,300),d(430,485,310,323,GY),d(430,473,328,345,GY)]),
     d(368,405,365,373,'#b5d56a',[d(422,515,350,374,'#b5d56a')]),
     d(365,405,405,417,'#4fc3f7',[d(420,515,380,402,CY),d(420,520,406,430,CY)])]),
    d(322,385,465,475,'#ff9800',[d(400,488,437,447,'#ff9800'),d(400,488,452,462,'#ff9800'),d(400,468,466,482,'#ff9800',[d(480,557,466,477,'#ff9800'),d(480,557,481,492,'#ff9800')]),d(400,505,495,505,'#ff9800')])]),
   d(280,320,520,540,'',[d(345,480,512,518),d(340,402,547,557,'#d8b0d8',[d(422,533,523,535,'#e3c6e3'),d(422,533,540,552,'#e3c6e3'),d(422,562,555,566,'#e3c6e3'),d(422,515,568,580,'#e3c6e3')])])])]),
 d(187,207,792,798,'',[
  d(230,258,660,667,'',[
   d(275,332,627,636,LB,[d(347,438,585,607,LB),d(347,420,622,632,LB),d(352,410,638,648,LB),d(352,405,652,664,LB)]),
   d(280,315,697,702,'',[d(347,433,682,695),d(340,370,703,710)])]),
  d(230,268,923,930,'',[
   d(285,330,808,815,'',[d(347,393,792,800),d(347,385,808,813),d(350,400,823,830)]),
   d(282,345,917,928,'#a8cc60',[d(365,435,910,920,'#a8cc60'),d(372,453,924,933,'#a8cc60')]),
   d(280,330,968,978,TE,[d(347,415,947,955,TE,[d(432,493,940,957,TE)]),d(347,468,962,972,TE),d(345,385,990,1000,TE,[d(400,458,980,987,TE),d(400,458,993,1000,TE),d(400,438,1005,1015,TE)])]),
   d(282,360,1033,1044,RD,[d(378,408,1020,1030,RD),d(378,408,1035,1044,RD),d(378,408,1050,1060,RD)])])])])];
const green2=[d(410,445,807,817,'#d8efe6',[
  d(460,525,752,768,YE,[d(542,600,718,735,YE),d(540,620,740,755,YE),d(540,613,760,775,YE),d(540,638,783,805,YE)]),
  d(480,530,845,853,'',[d(545,580,845,853,CY,[d(598,663,810,820,CY),d(597,650,825,848,CY),d(597,658,852,862,CY),d(597,650,866,888,CY)])])]),
 d(432,468,637,650,'#cfe9f2',[d(485,545,635,642,'#ffe0b0',[d(560,675,615,625,'#ffe0b0'),d(563,658,628,638,'#ffe0b0'),d(563,633,643,653,'#ffe0b0'),d(562,700,655,667,'#ffe0b0')])])];
const dark=[d(670,748,842,856,YE,[d(765,830,824,830,O),d(765,808,838,846,O),d(765,818,851,867,O)])];
const purple2=[c(345,397,50,67,CY),c(316,380,150,163,'#fff'),c(393,437,130,148,'#fff')];
let H='';
const fx=v=>Math.round(v*10)/10;
function draw(n,side,col,depth){
 const ax=side<0?n.x1:n.x2,ay=n.y2;
 n.k.forEach(m=>{
  const bx=side<0?m.x2:m.x1,by=m.y2,dx=(bx-ax)/2;
  H+=`<path d="M${fx(ax)} ${fx(ay)}C${fx(ax+dx)} ${fx(ay)} ${fx(ax+dx*.6)} ${fx(by)} ${fx(bx)} ${fx(by)}" fill="none" stroke="${col}" stroke-width="${Math.max(.9,2.6-depth*.55)}"/>`;
  draw(m,side,col,depth+1);
 });
 const w=n.x2-n.x1,h=n.y2-n.y1;
 if(n.f)H+=`<rect x="${fx(n.x1)}" y="${fx(n.y1)}" width="${fx(w)}" height="${fx(h)}" fill="${n.f}"${depth===0?` stroke="${col}" stroke-width="1.8"`:''}/>`;
 H+=`<path d="M${fx(n.x1)} ${fx(n.y2)}H${fx(n.x2)}" stroke="${col}" stroke-width="1"/>`;
 const tc=n.f&&n.f!=='#fff'?'#7a3a2a':'#8a8f99';
 const lines=h>5?2:1;
 for(let i=0;i<lines;i++){
  const ly=n.y1+h*(i+1)/(lines+1)-.2;
  H+=`<path d="M${fx(n.x1+1)} ${fx(ly)}H${fx(n.x2-1)}" stroke="${tc}" stroke-width=".8" stroke-dasharray="1.600 .500" opacity=".42"/>`;
 }
}
function trunk(d0,col,w){H+=`<path d="${d0}" fill="none" stroke="${col}" stroke-width="${w}" stroke-linecap="round"/>`;}
const BL='#404a93',PU='#c39be2',SA='#ff8080',GN='#4cb884';
trunk('M1150 485C1168 487 1172 525 1181 583',BL,4);
trunk('M1200 583C1205 480 1205 405 1230 405',PU,3.5);
trunk('M1183 606C1172 650 1178 704 1150 704',SA,3.5);
trunk('M1196 606C1208 660 1195 780 1231 783',GN,3.5);
trunk('M1128 386V583',BL,2.4);
trunk('M1265 285V530',PU,2.4);
trunk('M1256 700V860',GN,2.4);
draw(blue[0],-1,BL,0);
draw(red[0],-1,SA,0);
red2.forEach(n=>draw(n,-1,SA,3));
draw(purple[0],1,PU,0);
purple2.forEach(n=>draw(n,1,PU,3));
draw(green[0],1,GN,0);
green2.forEach(n=>draw(n,1,GN,3));
draw(dark[0],1,'#2d3a78',3);
function brk(x,y1,y2,dir,col){H+=`<path d="M${x} ${y1}Q${x+dir*2} ${y1} ${x+dir*2} ${y1+4}V${y2-4}Q${x+dir*2} ${y2} ${x} ${y2}" fill="none" stroke="${col}" stroke-width="1"/>`;}
function pill(x1,x2,y1,y2,stroke,fill){H+=`<rect x="${x1}" y="${y1}" width="${x2-x1}" height="${y2-y1}" rx="${(y2-y1)/2}" fill="${fill||'#fff'}" stroke="${stroke}" stroke-width="1"/><path d="M${x1+3} ${(y1+y2)/2}H${x2-3}" stroke="#888" stroke-width=".9" stroke-dasharray="2 1"/>`;}
brk(1038,338,361,-1,BL);pill(1007,1035,344,355,BL);
brk(988,387,405,-1,BL);pill(963,987,393,400,BL);
brk(1000,412,430,-1,BL);pill(976,999,418,425,BL);
brk(1025,447,474,-1,BL);pill(1006,1023,459,462,BL);
brk(954,657,680,-1,SA);pill(938,952,666,670,SA);
brk(1043,647,679,-1,SA);
brk(1012,767,795,-1,SA);
H+=`<path d="M944 670C950 680 975 682 992 690" fill="none" stroke="#2d3a50" stroke-width="1"/>`;
pill(975,1008,690,696,'#2d3a78');
brk(1332,247,299,1,PU);pill(1335,1352,257,262,PU,CY);
brk(1324,287,299,1,PU);brk(1348,273,300,1,PU);
pill(1351,1366,283,289,PU);
H+=`<path d="M1353 263C1362 270 1355 275 1357 283M1298 292C1298 310 1292 320 1290 330" fill="none" stroke="#2d4060" stroke-width="1"/>`;
brk(1337,346,366,1,PU);pill(1338,1362,351,360,'#c9a56f',TN);
brk(1351,373,441,1,PU);
pill(1352,1364,425,429,PU,YE);
brk(1354,640,674,1,GN);pill(1357,1383,662,668,GN,OA);
brk(1342,806,822,1,GN);
brk(1422,839,896,1,GN);pill(1425,1431,866,869,GN);
pill(1354,1366,796,800,'#2d3a78');
H+=`<path d="M1345 797C1350 800 1352 798 1354 798M1403 884C1410 881 1415 881 1423 881" fill="none" stroke="#2d3a50" stroke-width="1"/>`;
H+=`<rect x="1426" y="881" width="26" height="4.500" rx="2" fill="${YE}" stroke="#2d3a78"/>`;
pill(1173,1199,915,923,'#333');
/* pictures inside top-level nodes */
H+=`<rect x="1242" y="399" width="18" height="15" fill="#5a1a24"/><circle cx="1251" cy="407" r="4" fill="#d89090"/>`;
H+=`<rect x="1132" y="699" width="15" height="11" fill="#efe8dd"/><path d="M1136 709V702H1142V709" fill="none" stroke="#8c5a4a"/>`;
H+=`<rect x="1241" y="778" width="8" height="6" fill="#2e3440"/><path d="M1249 778V790" stroke="#8a6a3a"/>`;
H+=`<rect x="1115" y="472" width="10" height="6" fill="#eef"/>`;
H+=`<rect x="1143" y="481" width="5" height="8" fill="#7fd6d6"/>`;
/* central node */
H+=`<rect x="1160" y="582" width="60" height="25" rx="12.500" fill="#ffd700"/>`;
H+=`<g transform="translate(2380 0) scale(-1 1)" font-family="'Noto Sans CJK SC',sans-serif" font-size="10" fill="#5a5a3a" text-anchor="middle"><text x="1190" y="592">七年级上册</text><text x="1190" y="604">道德与法治</text></g>`;
document.getElementById('mm-map').innerHTML=H;
})();
</script>
</body>
</html>
